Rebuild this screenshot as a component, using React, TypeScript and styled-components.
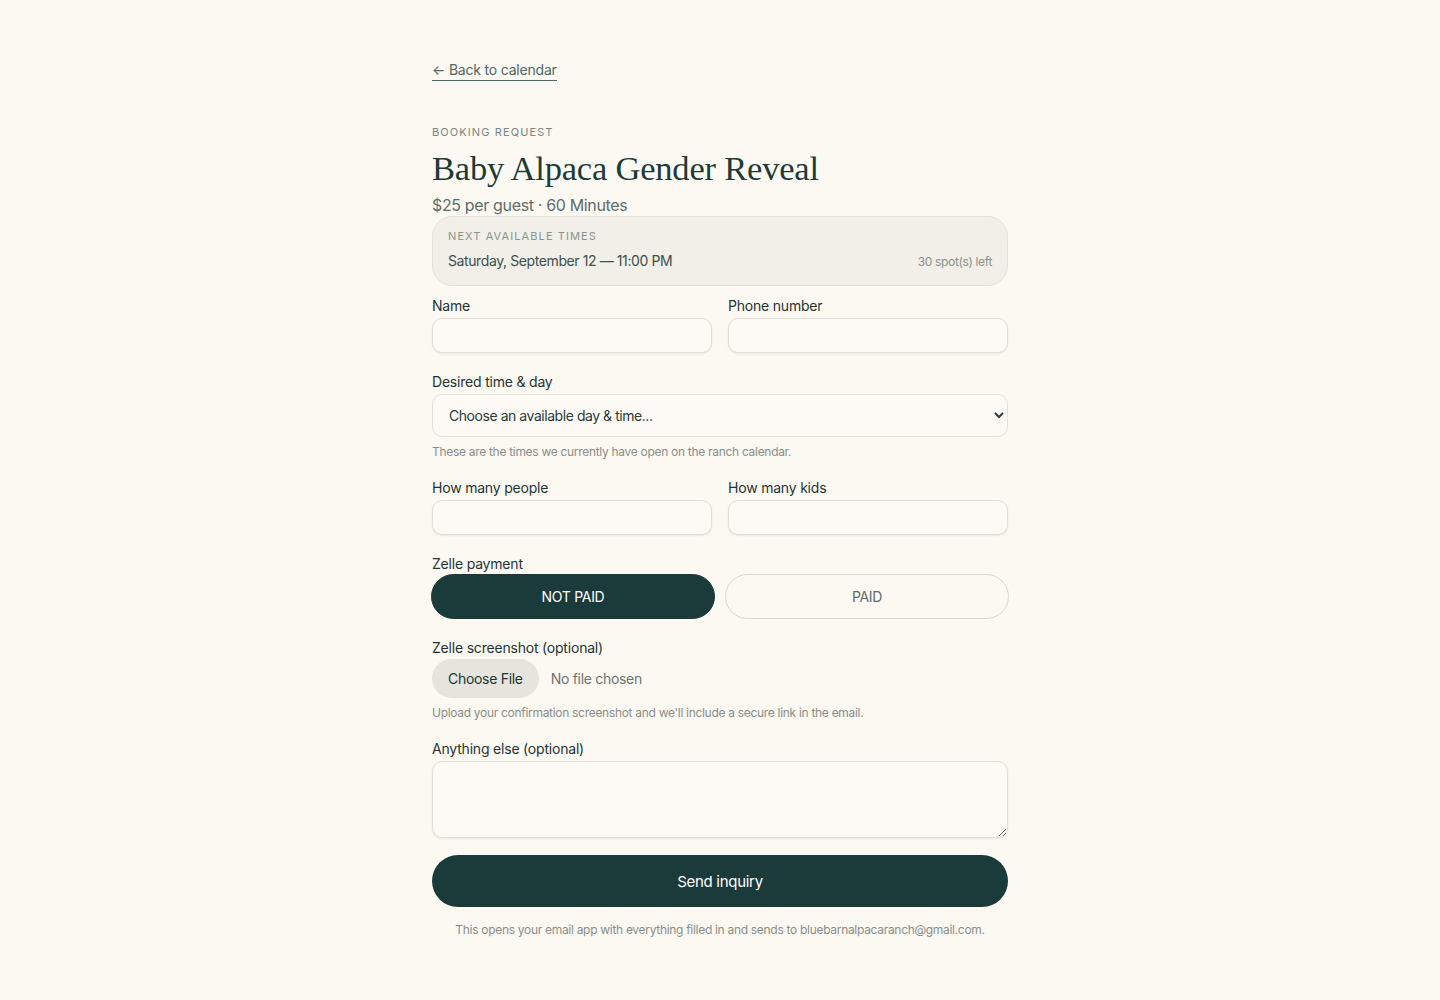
import React from "react";
import styled, { createGlobalStyle } from "styled-components";

const Global = createGlobalStyle`
  html, body { margin: 0; padding: 0; background: #fcf9f3; }
  body { font-family: Inter, "Open Sans", sans-serif; color: #1f3533; -webkit-font-smoothing: antialiased; }
  * { box-sizing: border-box; }
`;

const Page = styled.div`
  min-height: 1000px;
  background: #fcf9f3;
  display: flex;
  justify-content: center;
`;

const Column = styled.main`
  width: 576px;
  padding-top: 60px;
  padding-bottom: 48px;
  display: flex;
  flex-direction: column;
`;

const BackLink = styled.a`
  align-self: flex-start;
  font-size: 14px;
  line-height: 20px;
  color: #4f6662;
  text-decoration: none;
  border-bottom: 1px solid #4f6662;
  letter-spacing: -0.2px;
`;

const Eyebrow = styled.div<{ $tight?: boolean }>`
  margin-top: ${(p) => (p.$tight ? "0" : "43px")};
  font-size: 11px;
  line-height: 16px;
  letter-spacing: 0.1em;
  text-transform: uppercase;
  color: ${(p) => (p.$tight ? "#8c948f" : "#7a8581")};
`;

const Title = styled.h1`
  margin: 7px 0 0;
  font-family: "Liberation Serif", "DejaVu Serif", serif;
  font-weight: 400;
  font-size: 34.5px;
  line-height: 42px;
  color: #1c3b39;
  letter-spacing: -0.2px;
`;

const Subtitle = styled.div`
  margin-top: 5px;
  font-size: 16px;
  line-height: 22px;
  color: #5d6d69;
  letter-spacing: -0.35px;
`;

const NextCard = styled.section`
  margin-top: 0;
  background: #f1efe7;
  border: 1px solid #e4e1d8;
  border-radius: 20px;
  padding: 11px 15px 13px;
  display: flex;
  flex-direction: column;
  gap: 6px;
`;

const SlotRow = styled.div`
  display: flex;
  justify-content: space-between;
  align-items: baseline;
`;

const SlotTime = styled.span`
  font-size: 14px;
  line-height: 22px;
  color: #3c4f4c;
  letter-spacing: -0.4px;
`;

const SlotLeft = styled.span`
  font-size: 12px;
  color: #8a918d;
  letter-spacing: -0.35px;
`;

const Form = styled.form`
  margin-top: 10px;
  display: flex;
  flex-direction: column;
  gap: 19px;
`;

const Row = styled.div`
  display: grid;
  grid-template-columns: 1fr 1fr;
  gap: 16px;
`;

const Field = styled.label`
  display: flex;
  flex-direction: column;
  gap: 2px;
`;

const Group = styled.div`
  display: flex;
  flex-direction: column;
  gap: 0;
`;

const Label = styled.span`
  font-size: 14px;
  line-height: 20px;
  color: #1f3533;
  letter-spacing: -0.2px;
`;

const fieldBase = `
  width: 100%;
  background: #fdfaf5;
  border: 1px solid #e2ded6;
  border-radius: 10px;
  box-shadow: 0 1px 2px rgba(40, 40, 30, 0.08);
  font-family: Inter, "Open Sans", sans-serif;
  color: #1f3533;
  outline: none;
`;

const TextInput = styled.input`
  ${fieldBase}
  height: 35px;
  padding: 0 12px;
  font-size: 14px;
`;

const Select = styled.select`
  ${fieldBase}
  height: 43px;
  padding: 0 12px;
  font-size: 14px;
  letter-spacing: -0.45px;
  color: #2a3b39;
  border-color: #e6e2da;
  box-shadow: none;
`;

const Helper = styled.span<{ $center?: boolean }>`
  margin-top: 5px;
  font-size: 12px;
  line-height: 15px;
  color: #8a8e89;
  letter-spacing: -0.3px;
  text-align: ${(p) => (p.$center ? "center" : "left")};
`;

const Toggle = styled.div`
  display: grid;
  grid-template-columns: 1fr 1fr;
  gap: 10px;
  margin: 0 -1px;
`;

const ToggleButton = styled.button<{ $active?: boolean }>`
  height: 45px;
  border-radius: 999px;
  border: 1px solid ${(p) => (p.$active ? "#1b3a3a" : "#dcd8cf")};
  background: ${(p) => (p.$active ? "#1b3a3a" : "transparent")};
  color: ${(p) => (p.$active ? "#ffffff" : "#5f6d6a")};
  font-family: Inter, "Open Sans", sans-serif;
  font-size: 14px;
  letter-spacing: -0.3px;
  cursor: pointer;
`;

const FileInput = styled.input`
  margin-top: -1px;
  font-family: Inter, "Open Sans", sans-serif;
  font-size: 14px;
  color: #6d736f;
  letter-spacing: -0.3px;
  &::file-selector-button {
    height: 39px;
    padding: 0 16px;
    margin-right: 12px;
    border: none;
    border-radius: 999px;
    background: #e5e5de;
    color: #1f3533;
    font-family: Inter, "Open Sans", sans-serif;
    font-size: 14px;
    letter-spacing: -0.3px;
    cursor: pointer;
  }
`;

const TextArea = styled.textarea`
  ${fieldBase}
  height: 77px;
  padding: 10px 12px;
  font-size: 14px;
  resize: vertical;
`;

const Submit = styled.button`
  margin-top: -2px;
  height: 52px;
  border: none;
  border-radius: 999px;
  background: #1b3a3a;
  color: #ffffff;
  font-family: Inter, "Open Sans", sans-serif;
  font-size: 15px;
  letter-spacing: -0.3px;
  cursor: pointer;
`;

const Footer = styled.p`
  margin: -4px 0 0;
  font-size: 12px;
  line-height: 16px;
  color: #8a8e89;
  text-align: center;
  letter-spacing: -0.3px;
`;

export default function App() {
  const [paid, setPaid] = React.useState(false);
  return (
    <Page>
      <Global />
      <Column>
        <BackLink href="#">← Back to calendar</BackLink>
        <Eyebrow>Booking request</Eyebrow>
        <Title>Baby Alpaca Gender Reveal</Title>
        <Subtitle>$25 per guest · 60 Minutes</Subtitle>
        <NextCard>
          <Eyebrow $tight>Next available times</Eyebrow>
          <SlotRow>
            <SlotTime>Saturday, September 12 — 11:00 PM</SlotTime>
            <SlotLeft>30 spot(s) left</SlotLeft>
          </SlotRow>
        </NextCard>
        <Form onSubmit={(e) => e.preventDefault()}>
          <Row>
            <Field>
              <Label>Name</Label>
              <TextInput type="text" />
            </Field>
            <Field>
              <Label>Phone number</Label>
              <TextInput type="tel" />
            </Field>
          </Row>
          <Field>
            <Label>Desired time &amp; day</Label>
            <Select defaultValue="">
              <option value="">Choose an available day &amp; time...</option>
              <option value="1">Saturday, September 12 — 11:00 PM</option>
            </Select>
            <Helper>These are the times we currently have open on the ranch calendar.</Helper>
          </Field>
          <Row>
            <Field>
              <Label>How many people</Label>
              <TextInput type="number" />
            </Field>
            <Field>
              <Label>How many kids</Label>
              <TextInput type="number" />
            </Field>
          </Row>
          <Group>
            <Label>Zelle payment</Label>
            <Toggle>
              <ToggleButton type="button" $active={!paid} onClick={() => setPaid(false)}>
                NOT PAID
              </ToggleButton>
              <ToggleButton type="button" $active={paid} onClick={() => setPaid(true)}>
                PAID
              </ToggleButton>
            </Toggle>
          </Group>
          <Field>
            <Label>Zelle screenshot (optional)</Label>
            <FileInput type="file" />
            <Helper>Upload your confirmation screenshot and we'll include a secure link in the email.</Helper>
          </Field>
          <Field>
            <Label>Anything else (optional)</Label>
            <TextArea />
          </Field>
          <Submit type="submit">Send inquiry</Submit>
          <Footer>
            This opens your email app with everything filled in and sends to bluebarnalpacaranch@gmail.com.
          </Footer>
        </Form>
      </Column>
    </Page>
  );
}
